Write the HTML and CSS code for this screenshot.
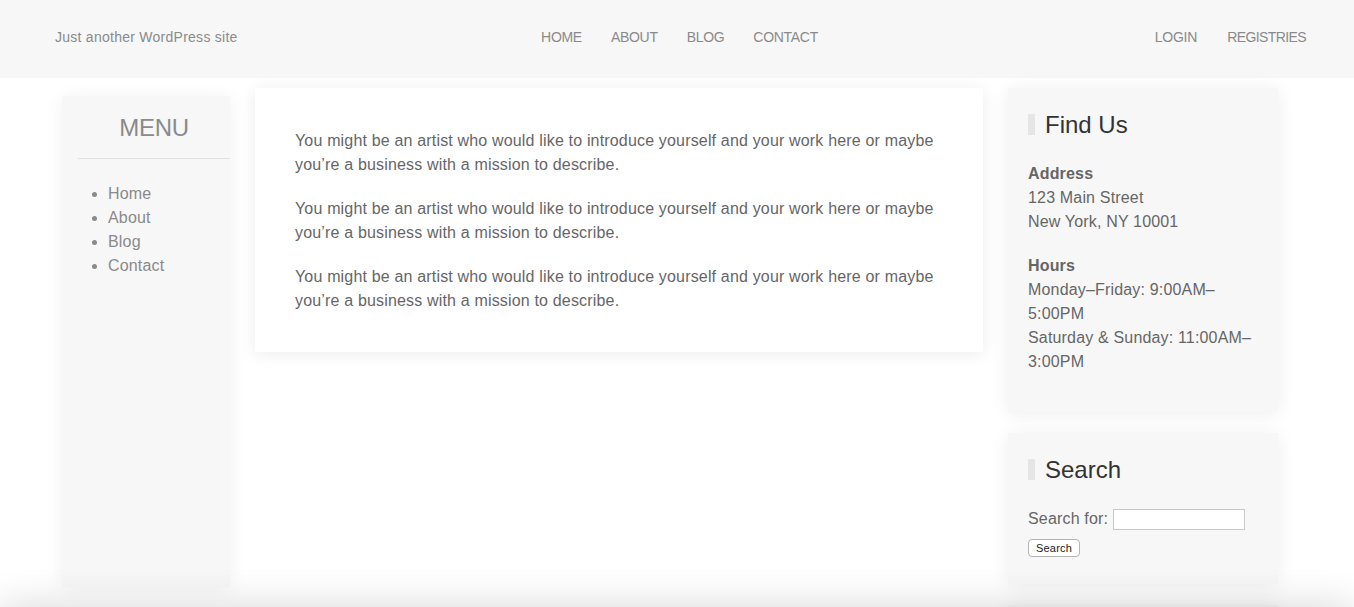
FILE: index.html
```html
<!DOCTYPE html>
<html lang="en">
<head>
<meta charset="utf-8">
<title>Just another WordPress site</title>
<link rel="stylesheet" href="styles.css">
</head>
<body>
<header class="site-header">
  <div class="tagline">Just another WordPress site</div>
  <nav class="main-nav">
    <a href="#">HOME</a>
    <a href="#">ABOUT</a>
    <a href="#">BLOG</a>
    <a href="#">CONTACT</a>
  </nav>
  <nav class="user-nav">
    <a href="#">LOGIN</a>
    <a href="#" class="narrow">REGISTRIES</a>
  </nav>
</header>

<div class="layout">
  <aside class="menu-box">
    <h2 class="menu-title">MENU</h2>
    <ul class="menu-list">
      <li><a href="#">Home</a></li>
      <li><a href="#">About</a></li>
      <li><a href="#">Blog</a></li>
      <li><a href="#">Contact</a></li>
    </ul>
  </aside>

  <main class="content">
    <p>You might be an artist who would like to introduce yourself and your work here or maybe you’re a business with a mission to describe.</p>
    <p>You might be an artist who would like to introduce yourself and your work here or maybe you’re a business with a mission to describe.</p>
    <p>You might be an artist who would like to introduce yourself and your work here or maybe you’re a business with a mission to describe.</p>
  </main>

  <aside class="sidebar">
    <section class="widget">
      <h2 class="widget-title">Find Us</h2>
      <p><strong>Address</strong><br>123 Main Street<br>New York, NY 10001</p>
      <p class="last"><strong>Hours</strong><br>Monday–Friday: 9:00AM–5:00PM<br>Saturday &amp; Sunday: 11:00AM–3:00PM</p>
    </section>
    <section class="widget widget-search">
      <h2 class="widget-title">Search</h2>
      <form class="search-form">
        <div class="search-row">
          <label for="s">Search for:</label>
          <input type="text" id="s" class="search-input">
        </div>
        <button type="button" class="search-btn">Search</button>
      </form>
    </section>
    <section class="widget widget-more"></section>
  </aside>
</div>

<footer class="site-footer"></footer>
</body>
</html>
```

FILE: styles.css
```css
* { box-sizing: border-box; }

html, body {
  margin: 0;
  padding: 0;
}

body {
  background: #ffffff;
  font-family: "Liberation Sans", Arial, sans-serif;
  color: #666666;
  font-size: 16px;
  line-height: 24px;
  letter-spacing: 0.17px;
  overflow: hidden;
}

a { text-decoration: none; color: inherit; }

/* Header */
.site-header {
  height: 78px;
  background: #f7f7f7;
  display: grid;
  grid-template-columns: 1fr auto 1fr;
  align-items: start;
  padding: 29px 48px 0 55px;
  font-size: 14px;
  line-height: 16px;
  color: #8a8a8a;
}

.tagline {
  letter-spacing: 0.26px;
}

.main-nav {
  display: flex;
  gap: 29px;
  letter-spacing: -0.3px;
  transform: translateX(-1px);
}

.user-nav {
  display: flex;
  gap: 30px;
  justify-content: flex-end;
  letter-spacing: -0.2px;
}

.user-nav .narrow {
  letter-spacing: -0.6px;
}

/* Layout */
.layout {
  display: flex;
  align-items: flex-start;
  gap: 25px;
  padding: 10px 0 0 62px;
}

.menu-box {
  width: 168px;
  height: 491px;
  margin-top: 8px;
  background: #f7f7f7;
  padding: 14px 0 0 16px;
  box-shadow: 0 2px 18px rgba(0, 0, 0, 0.06);
  flex-shrink: 0;
}

.menu-title {
  margin: 0;
  font-size: 24px;
  line-height: 36px;
  font-weight: 400;
  letter-spacing: -0.3px;
  color: #8a8a8a;
  text-align: center;
  padding-bottom: 12px;
  border-bottom: 1px solid #e2e2e2;
}

.menu-list {
  margin: 23px 0 0;
  padding-left: 30px;
  color: #8a8a8a;
  font-size: 16px;
  line-height: 24px;
}

.content {
  width: 728px;
  background: #ffffff;
  padding: 41px 40px 39px;
  box-shadow: 0 2px 16px rgba(0, 0, 0, 0.08);
  flex-shrink: 0;
}

.content p {
  margin: 0 0 20px;
}

.content p:last-child { margin-bottom: 0; }

/* Sidebar */
.sidebar {
  width: 270px;
  display: flex;
  flex-direction: column;
  gap: 21px;
  flex-shrink: 0;
}

.widget {
  background: #f7f7f7;
  padding: 26px 20px 18px;
  box-shadow: 0 2px 18px rgba(0, 0, 0, 0.07);
}

.widget-title {
  margin: 0 0 27px;
  font-size: 24px;
  line-height: 21px;
  font-weight: 400;
  letter-spacing: 0;
  color: #333333;
  border-left: 7px solid #e5e5e5;
  padding-left: 10px;
}

.widget p {
  margin: 0 0 20px;
}

.widget strong { color: #666666; }

.widget-search {
  padding-bottom: 25px;
}

.search-row {
  display: flex;
  align-items: center;
  gap: 5px;
}

.search-input {
  width: 132px;
  height: 21px;
  border: 1px solid #c9c9c9;
  background: #ffffff;
  padding: 0 3px;
  font-size: 13px;
}

.search-btn {
  margin-top: 8px;
  font-family: "Liberation Sans", Arial, sans-serif;
  font-size: 11px;
  line-height: 14px;
  letter-spacing: 0.2px;
  padding: 1px 7px;
  height: 18px;
  border: 1px solid #b5b5b5;
  border-radius: 4px;
  background: #ffffff;
  color: #222222;
}

.widget-more {
  height: 200px;
  padding: 0;
}

/* Footer peeking below the viewport */
.site-footer {
  position: fixed;
  left: 0;
  right: 0;
  bottom: -60px;
  height: 60px;
  background: #f7f7f7;
  box-shadow: 0 0 40px rgba(0, 0, 0, 0.16);
}
```
